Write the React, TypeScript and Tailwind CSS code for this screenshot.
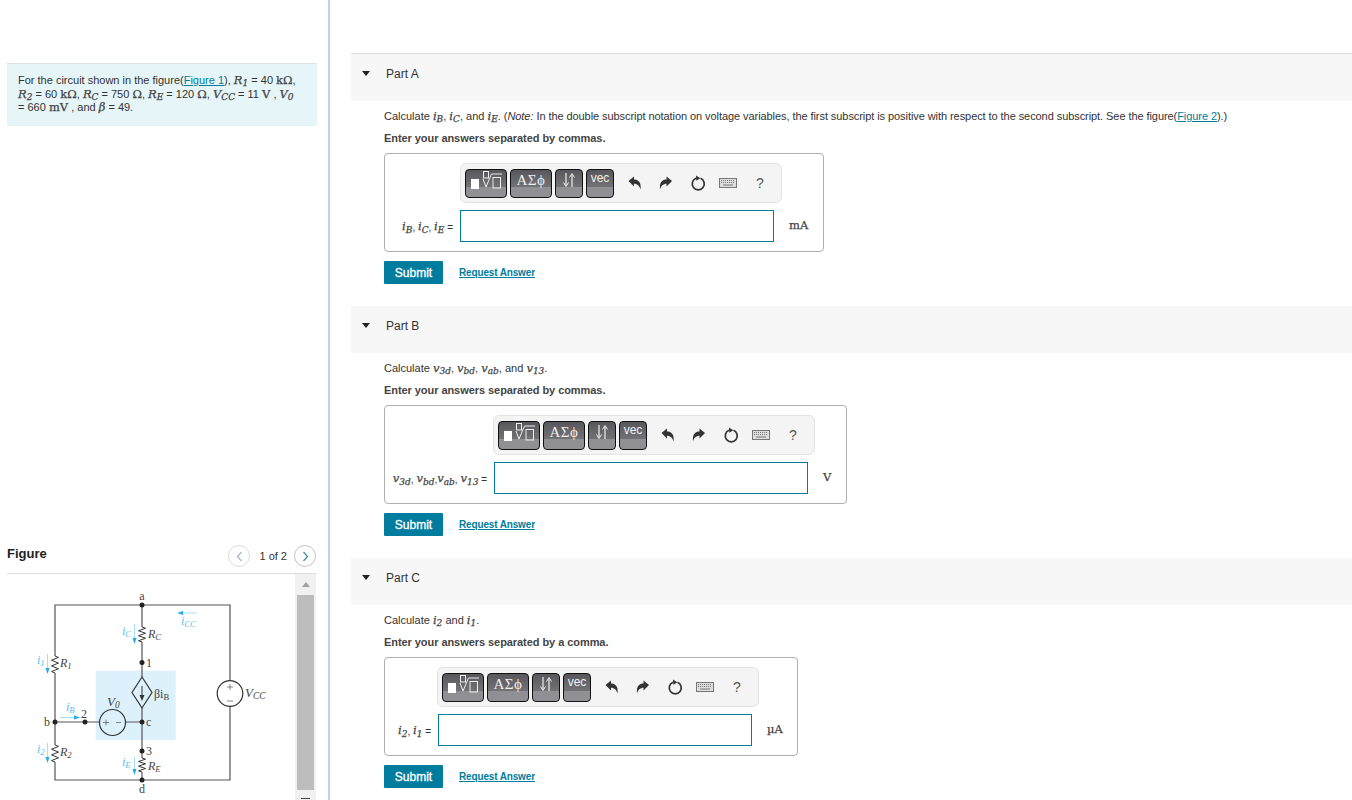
import React from "react";

const serif = "[font-family:'Liberation_Serif',serif]";
const math = "[font-family:'DejaVu_Serif',serif]";

function M({ b, s, up }: { b: string; s?: string; up?: boolean }) {
  return (
    <span className={`${math} text-[11.500px] text-[#444] [-webkit-text-stroke:0.25px_#444] ${up ? "" : "italic"}`}>
      {b}
      {s ? <sub className="text-[9px] italic">{s}</sub> : null}
    </span>
  );
}

function Tri({ cls }: { cls: string }) {
  return <span className={cls} />;
}

function Btn({ w, children }: { w: string; children: React.ReactNode }) {
  return (
    <div className={`${w} h-[29px] shrink-0 rounded-[4px] border border-[#111] bg-[linear-gradient(#58585c_0%,#727276_62%,#8f8f94_63%,#8f8f94_100%)] relative overflow-hidden flex justify-center text-white`}>
      {children}
    </div>
  );
}

function Toolbar() {
  return (
    <div className="w-[322px] h-[40px] rounded-[6px] border border-[#e3e3e3] bg-[#f4f4f4] flex items-center pl-[4px]">
      <div className="flex gap-[3px]">
        <Btn w="w-[42px]">
          <svg width="40" height="27" viewBox="0 0 40 27" fill="none">
            <rect x="5" y="9" width="8" height="10" fill="#fff" />
            <rect x="17.500" y="1.500" width="5" height="6.500" stroke="#eee" strokeWidth="1" />
            <path d="M17 9l3 8 5.500-13H36" stroke="#eee" strokeWidth="1" />
            <rect x="27" y="7.500" width="7.500" height="10.500" stroke="#eee" strokeWidth="1" />
          </svg>
        </Btn>
        <Btn w="w-[42px]">
          <span className={`${serif} text-[15px] leading-[18px] mt-[1px] tracking-[0.5px] text-[#eee]`}>ΑΣϕ</span>
        </Btn>
        <Btn w="w-[28px]">
          <svg width="14" height="18" viewBox="0 0 14 18" fill="none" className="mt-[1px]">
            <path d="M4 2v12M10 16V4" stroke="#eee" strokeWidth="1.200" />
            <path d="M1.500 11.500L4 15.500l2.500-4M7.500 6.500L10 2.500l2.500 4" stroke="#eee" strokeWidth="1" />
          </svg>
        </Btn>
        <Btn w="w-[28px]">
          <span className="text-[12px] leading-[14px] mt-[1px] text-[#f2f2f2]">vec</span>
        </Btn>
      </div>
      <div className="flex items-center ml-[14px] text-[#3a3a3a]">
        <svg width="14" height="14" viewBox="0 0 14 14" className="mr-[17px]">
          <path d="M0.500 5L6 0.500V3.500C10 3.500 13.500 6 12.500 13.500 11.500 10 9.500 7.800 6 7.800V10.500z" fill="#333" />
        </svg>
        <svg width="14" height="14" viewBox="0 0 14 14" className="mr-[17px]">
          <path d="M13 5L7.500 0.500V3.500C3.500 3.500 0 6 1 13.500 2 10 4 7.800 7.500 7.800V10.500z" fill="#333" />
        </svg>
        <svg width="16" height="16" viewBox="0 0 16 16" className="mr-[13px]" fill="none">
          <path d="M6 3.300a6 6 0 1 0 4.500 0" stroke="#333" strokeWidth="1.700" />
          <path d="M6 0.500l4.300 2.800-4 2.500z" fill="#333" />
        </svg>
        <svg width="18" height="10" viewBox="0 0 18 10" className="mr-[19px]">
          <rect x="0.500" y="0.500" width="17" height="9" fill="#ddd" stroke="#777" />
          <path d="M2 2.500h14M2 4.500h14" stroke="#777" strokeDasharray="1 1" />
          <path d="M4 7h10" stroke="#777" />
        </svg>
        <span className="text-[14px] leading-[16px] text-[#555]">?</span>
      </div>
    </div>
  );
}

function Answer({
  width,
  pad,
  col,
  label,
  unit,
}: {
  width: string;
  pad: string;
  col: string;
  label: React.ReactNode;
  unit: React.ReactNode;
}) {
  return (
    <div className={`${width} h-[99px] rounded-[4px] border border-[#b0b0b0] pt-[9px]`}>
      <div className={`flex ${pad}`}>
        <Toolbar />
      </div>
      <div className="flex mt-[7px] items-center">
        <div className={`${col} shrink-0 pr-[7px] pt-[2px] flex justify-end items-center whitespace-nowrap text-[10px]`}>
          {label}
        </div>
        <div className="w-[314px] h-[32px] border border-[#007c9e] bg-white shrink-0" />
        <div className={`${math} text-[11.500px] text-[#444] [-webkit-text-stroke:0.25px_#444] ml-[15px] -mt-[1px]`}>{unit}</div>
      </div>
    </div>
  );
}

function Part({
  title,
  q,
  enter,
  box,
  first,
}: {
  title: string;
  q: React.ReactNode;
  enter: string;
  box: React.ReactNode;
  first?: boolean;
}) {
  return (
    <section className="h-[252px]">
      <div className={`h-[47px] bg-[#f7f7f7] flex items-center pb-[8px] pl-[11px] ${first ? "shadow-[0_-1px_0_#dddddd]" : ""}`}>
        <Tri cls="w-0 h-0 border-x-[4.500px] border-x-transparent border-t-[5px] border-t-[#222]" />
        <span className="text-[12px] text-[#333] ml-[16px]">{title}</span>
      </div>
      <div className="pl-[33px]">
        <p className="h-[15px] mt-[8px] text-[11px] leading-[15px] text-[#333] whitespace-nowrap">{q}</p>
        <p className="h-[15px] mt-[7px] text-[11px] leading-[15px] text-[#444] font-bold tracking-[-0.06px]">{enter}</p>
        <div className="mt-[7px]">{box}</div>
        <div className="flex items-center mt-[9px]">
          <button className="w-[59px] h-[23px] bg-[#007c9e] text-white text-[12px] [-webkit-text-stroke:0.3px_#ffffff] rounded-[1px]">Submit</button>
          <a className="ml-[16px] text-[10px] font-bold text-[#007c9e] underline tracking-[-0.15px]">Request Answer</a>
        </div>
      </div>
    </section>
  );
}

function Res({ x, y, h }: { x: number; y: number; h: number }) {
  const s = h / 6;
  const d = `M${x} ${y}l3.500 ${s / 2}l-7 ${s}l7 ${s}l-7 ${s}l7 ${s}l-7 ${s}l3.500 ${s / 2}`;
  return <path d={d} fill="none" stroke="#333" strokeWidth="1" />;
}

function BlueDown({ x, y, h }: { x: number; y: number; h: number }) {
  return (
    <g>
      <path d={`M${x} ${y}v${h - 5}`} stroke="#7fd0f5" strokeWidth="0.700" />
      <path d={`M${x - 2} ${y + h - 6}h4l-2 6z`} fill="#1fa9ee" />
    </g>
  );
}

function Lbl({ x, y, t, s, c, i, fs, a }: { x: number; y: number; t: string; s?: string; c?: string; i?: boolean; fs?: number; a?: "middle" }) {
  return (
    <text x={x} y={y} textAnchor={a} fontFamily="'Liberation Serif',serif" fontSize={fs ?? 12} fontStyle={i ? "italic" : "normal"} fill={c ?? "#444"}>
      {t}
      {s ? <tspan fontSize={(fs ?? 12) * 0.72} dy="2">{s}</tspan> : null}
    </text>
  );
}

function Figure() {
  const blue = "#53c3f2";
  return (
    <svg width="289" height="226" viewBox="7 574 289 226" className="shrink-0">
      <rect x="95.700" y="670.700" width="80" height="69.300" fill="#ddf1fc" />
      <path d="M142 605H55V656M55 673V745M55 762V780H230V706M230 680V605H142V627M142 642V677M142 708V758M142 772V780M55 722H99M125.500 722H142" fill="none" stroke="#555" strokeWidth="1.200" />
      <Res x={55} y={656} h={17} />
      <Res x={55} y={745} h={17} />
      <Res x={142} y={627} h={15} />
      <Res x={142} y={758} h={14} />
      <path d="M142 677l10 15.500-10 15.500-10-15.500z" fill="none" stroke="#333" strokeWidth="1.200" />
      <path d="M142 686v11" stroke="#333" strokeWidth="1" />
      <path d="M139.500 695h5l-2.500 6z" fill="#333" />
      <circle cx="112.500" cy="722.500" r="13" fill="#ddf1fc" stroke="#333" strokeWidth="1.200" />
      <path d="M103 722.500h6M106 719.500v6M116 722.500h5" stroke="#555" strokeWidth="0.700" />
      <circle cx="230" cy="693.500" r="12.800" fill="#fff" stroke="#333" strokeWidth="1.200" />
      <path d="M227 687h6M230 684v6M227 701h6" stroke="#555" strokeWidth="0.700" />
      {[[142, 605], [142, 662.5], [55, 722], [85, 722], [142, 722], [142, 751], [142, 780]].map(([x, y]) => (
        <circle key={`${x}-${y}`} cx={x} cy={y} r="2.500" fill="#222" />
      ))}
      <BlueDown x={134.500} y={624} h={20} />
      <BlueDown x={47.500} y={654} h={20} />
      <BlueDown x={47.500} y={743} h={20} />
      <BlueDown x={134.500} y={757} h={18} />
      <path d="M60 717.500h15" stroke="#7fd0f5" strokeWidth="0.700" />
      <path d="M74 715.500l6 2-6 2z" fill="#1fa9ee" />
      <path d="M182 613h15" stroke="#7fd0f5" strokeWidth="0.700" />
      <path d="M183 611l-6 2 6 2z" fill="#1fa9ee" />
      <Lbl x={142} y={600} t="a" a="middle" />
      <Lbl x={146} y={666.500} t="1" />
      <Lbl x={44} y={726} t="b" />
      <Lbl x={81} y={718} t="2" />
      <Lbl x={146} y={726} t="c" />
      <Lbl x={146} y={755} t="3" />
      <Lbl x={142} y={793} t="d" a="middle" />
      <Lbl x={148} y={638} t="R" s="C" i />
      <Lbl x={60} y={667} t="R" s="1" i />
      <Lbl x={60} y={756} t="R" s="2" i />
      <Lbl x={148} y={770} t="R" s="E" i />
      <Lbl x={245} y={697} t="V" s="CC" i fs={13} />
      <Lbl x={107} y={706} t="V" s="0" i fs={13} />
      <Lbl x={154} y={698} t="βi" s="B" fs={12} />
      <Lbl x={122} y={635} t="i" s="C" c={blue} i />
      <Lbl x={37} y={664} t="i" s="1" c={blue} i />
      <Lbl x={37} y={753} t="i" s="2" c={blue} i />
      <Lbl x={122} y={766} t="i" s="E" c={blue} i />
      <Lbl x={66} y={711} t="i" s="B" c={blue} i />
      <Lbl x={181} y={625} t="i" s="CC" c={blue} i />
    </svg>
  );
}

export default function App() {
  return (
    <div className="h-[800px] w-[1352px] overflow-hidden bg-white flex [font-family:'Liberation_Sans',Arial,sans-serif] text-[#333]">
      <aside className="w-[330px] h-full border-r-[2px] border-[#bfd3e6] pl-[7px] pr-[10px] pt-[63px] shrink-0 flex flex-col">
        <div className="w-[310px] h-[63px] bg-[#e6f5f7] border-t border-[#dbe3e6] pl-[11px] pt-[10px] text-[11px] leading-[13.500px] whitespace-nowrap">
          For the circuit shown in the figure(<a className="text-[#007c9e] underline">Figure 1</a>), <M b="R" s="1" /> = 40 <M b="kΩ" up />,
          <br />
          <M b="R" s="2" /> = 60 <M b="kΩ" up />, <M b="R" s="C" /> = 750 <M b="Ω" up />, <M b="R" s="E" /> = 120 <M b="Ω" up />, <M b="V" s="CC" /> = 11 <M b="V" up /> , <M b="V" s="0" />
          <br />= 660 <M b="mV" up /> , and <M b="β" /> = 49.
        </div>
        <div className="mt-[419px] h-[29px] w-[310px] border-b border-[#dedede] flex items-start justify-between">
          <h2 className="text-[13px] leading-[15px] font-bold text-[#222] mt-[1px]">Figure</h2>
          <div className="flex items-center mr-[1px]">
            <span className="w-[22px] h-[22px] rounded-full border border-[#dcdcdc] flex items-center justify-center">
              <svg width="7" height="11" viewBox="0 0 7 11" fill="none"><path d="M5.500 1L1.500 5.500 5.500 10" stroke="#a8b8bd" strokeWidth="1.200" /></svg>
            </span>
            <span className="text-[11px] ml-[9px] mr-[7px]">1 of 2</span>
            <span className="w-[22px] h-[22px] rounded-full border border-[#c4c4c4] flex items-center justify-center">
              <svg width="7" height="11" viewBox="0 0 7 11" fill="none"><path d="M1.500 1L5.500 5.500 1.500 10" stroke="#3f8ca3" strokeWidth="1.200" /></svg>
            </span>
          </div>
        </div>
        <div className="flex flex-1 w-[310px] min-h-0">
          <Figure />
          <div className="w-[21px] bg-[#f1f1f1] flex flex-col items-center pt-[8px] -ml-[1px] px-[2px]">
            <span className="w-0 h-0 border-x-[4.500px] border-x-transparent border-b-[5px] border-b-[#a3a3a3]" />
            <div className="w-full h-[195px] mt-[8px] bg-[#bdbdbd]" />
            <span className="mt-[8px] w-[9px] h-[1px] bg-[#444]" />
          </div>
        </div>
      </aside>
      <main className="flex-1 min-w-0 pl-[21px] pt-[54px]">
        <Part
          first
          title="Part A"
          q={
            <>
              Calculate <M b="i" s="B" />, <M b="i" s="C" />, and <M b="i" s="E" />.{" "}
              <span className="tracking-[-0.07px]">
                (<em>Note:</em> In the double subscript notation on voltage variables, the first subscript is positive with respect to the second subscript. See the figure(<a className="text-[#007c9e] underline">Figure 2</a>).)
              </span>
            </>
          }
          enter="Enter your answers separated by commas."
          box={
            <Answer
              width="w-[440px]"
              pad="pl-[75px]"
              col="w-[75px]"
              label={
                <>
                  <M b="i" s="B" />,&nbsp;<M b="i" s="C" />,&nbsp;<M b="i" s="E" />&nbsp;=
                </>
              }
              unit="mA"
            />
          }
        />
        <Part
          title="Part B"
          q={
            <>
              Calculate <M b="v" s="3d" />, <M b="v" s="bd" />, <M b="v" s="ab" />, and <M b="v" s="13" />.
            </>
          }
          enter="Enter your answers separated by commas."
          box={
            <Answer
              width="w-[463px]"
              pad="pl-[108px]"
              col="w-[109px]"
              label={
                <>
                  <M b="v" s="3d" />,&nbsp;<M b="v" s="bd" />,<M b="v" s="ab" />,&nbsp;<M b="v" s="13" />&nbsp;=
                </>
              }
              unit="V"
            />
          }
        />
        <Part
          title="Part C"
          q={
            <>
              Calculate <M b="i" s="2" /> and <M b="i" s="1" />.
            </>
          }
          enter="Enter your answers separated by a comma."
          box={
            <Answer
              width="w-[414px]"
              pad="pl-[52px]"
              col="w-[53px]"
              label={
                <>
                  <M b="i" s="2" />,&nbsp;<M b="i" s="1" />&nbsp;=
                </>
              }
              unit="µA"
            />
          }
        />
      </main>
    </div>
  );
}
